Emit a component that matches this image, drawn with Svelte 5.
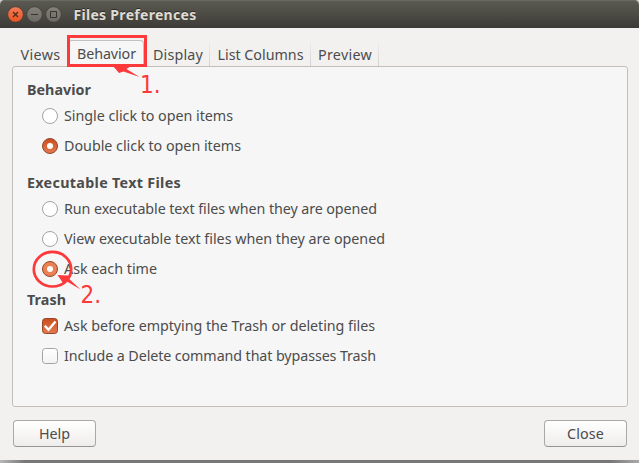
<script>
  const tabs = [
    { label: 'Views', width: 55, text: 40 },
    { label: 'Behavior', width: 76, text: 59, active: true },
    { label: 'Display', width: 66, text: 50 },
    { label: 'List Columns', width: 101, text: 86 },
    { label: 'Preview', width: 68, text: 54 }
  ];
  const groups = [
    { title: 'Behavior', text: 64, kind: 'radio', items: [
      { label: 'Single click to open items', text: 169 },
      { label: 'Double click to open items', text: 177, on: true }
    ] },
    { title: 'Executable Text Files', text: 154, kind: 'radio', items: [
      { label: 'Run executable text files when they are opened', text: 313 },
      { label: 'View executable text files when they are opened', text: 321 },
      { label: 'Ask each time', text: 93, on: true, hover: true }
    ] },
    { title: 'Trash', text: 39, kind: 'check', items: [
      { label: 'Ask before emptying the Trash or deleting files', text: 311, on: true },
      { label: 'Include a Delete command that bypasses Trash', text: 312 }
    ] }
  ];

  function fit(node, width) {
    const natural = node.getBoundingClientRect().width;
    node.style.letterSpacing = `${(width - natural) / node.textContent.length}px`;
  }
</script>

<div class="window">
  <header>
    <svg class="controls" width="60" height="20" viewBox="0 0 60 20">
      <defs>
        <linearGradient id="closeFill" x2="0" y2="1"><stop stop-color="#f47c58" /><stop offset="1" stop-color="#e9541f" /></linearGradient>
        <linearGradient id="grayFill" x2="0" y2="1"><stop stop-color="#84827b" /><stop offset="1" stop-color="#6b6962" /></linearGradient>
      </defs>
      <circle cx="9.5" cy="9.5" r="7.8" fill="url(#closeFill)" stroke="#403e38" stroke-width=".8" />
      <path d="M7 7l5 5m0-5l-5 5" stroke="#4a2c20" stroke-width="1.3" />
      <circle cx="28.5" cy="9.500" r="7.8" fill="url(#grayFill)" stroke="#403e38" stroke-width=".8" />
      <path d="M25 9.500h7" stroke="#35342f" />
      <circle cx="47.5" cy="9.500" r="7.8" fill="url(#grayFill)" stroke="#403e38" stroke-width=".8" />
      <path d="M44.500 6.500h6v6h-6z" fill="none" stroke="#35342f" />
    </svg>
    <h1><span use:fit={123}>Files Preferences</span></h1>
  </header>

  <main>
    <nav>
      {#each tabs as tab}
        <div class="tab" class:active={tab.active} style:width="{tab.width}px"><span use:fit={tab.text}>{tab.label}</span></div>
      {/each}
    </nav>
    <section class="panel">
      {#each groups as group}
        <div class="group">
          <h2><span use:fit={group.text}>{group.title}</span></h2>
          {#each group.items as item}
            <div class="row">
              <svg width="18" height="18" viewBox="0 0 18 18">
                <defs>
                  <linearGradient id="onFill" x2="0" y2="1"><stop stop-color="#cb4c1c" /><stop offset="1" stop-color="#e47b50" /></linearGradient>
                  <linearGradient id="boxFill" x2="0" y2="1"><stop stop-color="#fff" /><stop offset="1" stop-color="#f4f3f2" /></linearGradient>
                </defs>
                {#if group.kind === 'radio'}
                  <circle cx="9" cy="9" r="7.5" fill={item.hover ? '#eb8055' : item.on ? 'url(#onFill)' : '#fff'} stroke={item.on ? '#94472b' : '#a3a3a1'} />
                  {#if item.on}<circle cx="9" cy="9" r="3" fill="#fff" />{/if}
                {:else}
                  <rect x="1.5" y="1.5" width="15" height="15" rx="3" fill={item.on ? 'url(#onFill)' : 'url(#boxFill)'} stroke={item.on ? '#94472b' : '#a3a3a1'} />
                  {#if item.on}
                    <path d="M3.800 8.800l3.700 4L14.500 4.500" fill="none" stroke="#fff" stroke-width="2.400" />
                  {/if}
                {/if}
              </svg>
              <span use:fit={item.text}>{item.label}</span>
            </div>
          {/each}
        </div>
      {/each}
    </section>
    <footer>
      <button><span use:fit={31}>Help</span></button>
      <button><span use:fit={37}>Close</span></button>
    </footer>
  </main>
  <div class="shadow"></div>

  <svg class="notes" width="639" height="463" viewBox="0 0 639 463">
    <rect x="68.5" y="36.5" width="77" height="29" fill="none" stroke="#fc393b" stroke-width="3" />
    <path d="M113 66l16.500 1-3 2L139.500 77l-16-5.500-4.500 1.500z" fill="#fc393b" />
    <ellipse cx="52.500" cy="269.200" rx="18.700" ry="17.300" fill="none" stroke="#fc393b" stroke-width="2.700" />
    <path d="M57.500 275l14 .8-2.500 3L80.500 289.500l-13.500-8-3 3z" fill="#fc393b" />
    <text x="140" y="93">1.</text>
    <text x="80.500" y="303">2.</text>
  </svg>
</div>

<style>
  :global(body) { margin: 0; overflow: hidden; background: #c9c9c9; }
  .window {
    position: relative;
    display: flex;
    flex-direction: column;
    width: 639px;
    height: 463px;
    color: #4c4c4c;
    font: 14.3px/20px 'Noto Sans', 'Open Sans', sans-serif;
  }
  span { white-space: nowrap; }
  header {
    display: flex;
    align-items: center;
    box-sizing: border-box;
    height: 28px;
    padding: 1px 0 0 6px;
    border-radius: 5px 5px 0 0;
    background: linear-gradient(#5c5b52, #3c3b37);
    box-shadow: inset 0 1px #696861;
  }
  h1 {
    margin: 0 0 0 7.500px;
    font-size: 14px;
    line-height: 20px;
    color: #dfdbd2;
    text-shadow: 0 -1px #2d2c29;
  }
  main { display: flex; flex: 1; flex-direction: column; padding: 12px 12px 0; background: #f2f1f0; }
  nav { display: flex; height: 26px; padding-left: 1px; }
  .tab {
    display: flex;
    justify-content: center;
    box-sizing: border-box;
    height: 26px;
    padding: 5px 0 0 1px;
    border-right: 1px solid;
    border-image: linear-gradient(#f2f1f0, #d3d1cf) 1;
  }
  .tab.active {
    padding-top: 3px;
    border: 1px solid #c3c1bf;
    border-image: none;
    border-bottom: 0;
    border-radius: 4px 4px 0 0;
    background: #f6f6f6;
  }
  .tab:nth-child(3) { padding-left: 3px; }
  .panel {
    box-sizing: border-box;
    height: 341px;
    width: 616px;
    padding: 13px 14px;
    border: 1px solid #c2bfbb;
    border-radius: 3px;
    background: #f6f6f6;
  }
  h2 { margin: 0 0 1px; font-size: 14.300px; line-height: 20px; }
  .group:nth-child(2) { margin: 12px 0 6px; }
  .row { display: flex; align-items: center; gap: 5px; height: 30px; padding-left: 14px; }
  footer { display: flex; justify-content: space-between; padding: 13px 0 0 1px; }
  button {
    width: 83px;
    height: 27px;
    padding: 0;
    border: 1px solid #aaa8a6;
    border-bottom-color: #979593;
    border-radius: 4px;
    background: linear-gradient(#fff, #efedeb);
    color: inherit;
    font: inherit;
  }
  .shadow { height: 3px; background: linear-gradient(90deg, #b8b8b8, #777 25px, #777 610px, #aaa); }
  .notes { position: absolute; inset: 0; }
  .notes text { fill: #fc393b; font: 24px 'DejaVu Sans Condensed', 'DejaVu Sans', sans-serif; }
</style>
